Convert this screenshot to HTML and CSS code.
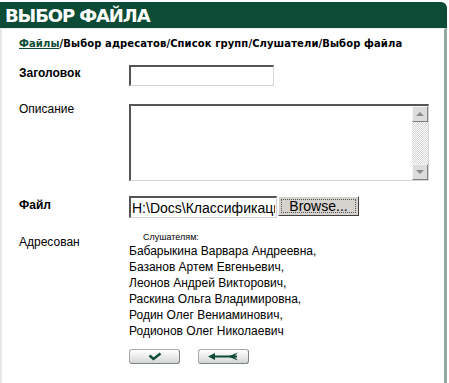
FILE: index.html
```
<!DOCTYPE html>
<html lang="ru">
<head>
    <meta charset="UTF-8">
    <title>Выбор файла</title>
    <link rel="stylesheet" href="styles.css">
</head>
<body>
    <div class="page">
        <div class="title">ВЫБОР ФАЙЛА</div>
        <div class="panel">
            <div class="crumbs">
                <a href="#">Файлы</a>/Выбор адресатов/Список групп/Слушатели/Выбор файла
            </div>

            <div class="form">
                <div class="label bold">Заголовок</div>
                <div><input type="text" class="field title-field"></div>

                <div class="label descr-label">Описание</div>
                <div class="field descr">
                    <textarea></textarea>
                    <div class="scrollbar">
                        <div class="arrow up"></div>
                        <div class="track"></div>
                        <div class="arrow down"></div>
                    </div>
                </div>

                <div class="label bold file-label">Файл</div>
                <div class="file-row">
                    <input type="text" class="field path" value="H:\Docs\Классификация.doc">
                    <button class="browse">Browse...</button>
                </div>

                <div class="label">Адресован</div>
                <div class="addressees">
                    <div class="group">Слушателям:</div>
                    Бабарыкина Варвара Андреевна,<br>
                    Базанов Артем Евгеньевич,<br>
                    Леонов Андрей Викторович,<br>
                    Раскина Ольга Владимировна,<br>
                    Родин Олег Вениаминович,<br>
                    Родионов Олег Николаевич
                </div>

                <div></div>
                <div class="actions">
                    <button class="act" title="OK">
                        <svg width="14" height="9" viewBox="0 0 14 9"><path d="M1.5 3.5 L5.5 7 L12.5 1.5" fill="none" stroke="#0d4b35" stroke-width="2.4"/></svg>
                    </button>
                    <button class="act" title="Назад">
                        <svg width="34" height="9" viewBox="0 0 34 9"><path d="M4 4.5 H30" stroke="#0d4b35" stroke-width="2"/><path d="M1 4.5 L8 1 L8 8 Z" fill="#0d4b35"/><path d="M21 4.5 L31 0.5 L27 4.5 L31 8.5 Z" fill="#0d4b35"/></svg>
                    </button>
                </div>
            </div>
        </div>
    </div>
</body>
</html>
```

FILE: styles.css
```
body {
    margin: 0;
    background: #fff;
    font-family: "Liberation Sans", Arial, sans-serif;
    font-size: 12px;
    color: #000;
}
.page {
    width: 447px;
    padding-top: 2px;
}
.title {
    height: 26px;
    line-height: 27px;
    background: #0c4b35;
    color: #fff;
    font-family: "DejaVu Sans", Verdana, sans-serif;
    font-weight: bold;
    font-size: 18px;
    letter-spacing: -1.1px;
    padding-left: 5px;
    border-radius: 0 6px 0 0;
}
.panel {
    height: 349px;
    border-left: 2px solid #e6e8e6;
    border-right: 3px solid #93a89e;
    border-bottom: 3px solid #93a89e;
    border-top: 1px solid #eceeec;
    border-radius: 0 0 6px 0;
    padding: 9px 0 0 17px;
}
.crumbs {
    font-family: "DejaVu Sans", Verdana, sans-serif;
    font-weight: bold;
    font-size: 10px;
    letter-spacing: 0.1px;
}
.crumbs a {
    color: #0c4b35;
}
.form {
    display: grid;
    grid-template-columns: 110px 1fr;
    row-gap: 16px;
    margin-top: 16px;
}
.label {
    padding-top: 1px;
}
.bold {
    font-weight: bold;
}
.field {
    box-sizing: border-box;
    border: 1px solid;
    border-color: #555 #d4d4d4 #d4d4d4 #555;
    border-width: 2px 1px 1px 2px;
    font-family: "Liberation Sans", Arial, sans-serif;
    margin: 0;
}
.title-field {
    width: 145px;
    height: 21px;
}
.descr-label {
    padding-top: 0;
}
.descr {
    display: flex;
    width: 300px;
    height: 77px;
    margin: 2px 0 -1px;
    background: #fff;
}
.descr textarea {
    flex: 1;
    border: none;
    resize: none;
    outline: none;
    margin: 0;
    padding: 2px;
}
.scrollbar {
    width: 16px;
    display: flex;
    flex-direction: column;
}
.track {
    flex: 1;
    background: repeating-conic-gradient(#d4d4d4 0 25%, #fff 0 50%) 0 0 / 2px 2px;
}
.arrow {
    height: 16px;
    box-sizing: border-box;
    background: #dcdcdc;
    border: 1px solid;
    border-color: #f6f6f6 #808080 #808080 #f6f6f6;
    display: flex;
    align-items: center;
    justify-content: center;
}
.arrow::before {
    content: "";
    border-left: 4px solid transparent;
    border-right: 4px solid transparent;
}
.up::before {
    border-bottom: 4px solid #8a8a8a;
}
.down::before {
    border-top: 4px solid #8a8a8a;
}
.file-label {
    padding-top: 2px;
}
.file-row {
    display: flex;
    align-items: flex-start;
    gap: 1px;
}
.path {
    width: 148px;
    height: 22px;
    font-size: 14px;
    padding: 1px 1px 0 1px;
}
.browse {
    width: 81px;
    height: 20px;
    padding: 0;
    background: #d6d3ce;
    border: 1px solid;
    border-color: #fff #404040 #404040 #fff;
    outline: 1px dotted #555;
    outline-offset: -4px;
    font-family: "Liberation Sans", Arial, sans-serif;
    font-size: 14px;
    color: #000;
}
.addressees {
    line-height: 16px;
    margin-top: -2px;
}
.group {
    font-size: 9px;
    line-height: 11px;
    padding-left: 14px;
}
.actions {
    display: flex;
    gap: 18px;
    margin-top: -6px;
}
.act {
    width: 51px;
    height: 15px;
    padding: 0;
    display: flex;
    align-items: center;
    justify-content: center;
    border: 1px solid #a8aca8;
    border-bottom-color: #7f857f;
    border-right-color: #7f857f;
    border-radius: 3px;
    background: linear-gradient(#ffffff, #e6e8e6 60%, #d2d6d2);
}
```
